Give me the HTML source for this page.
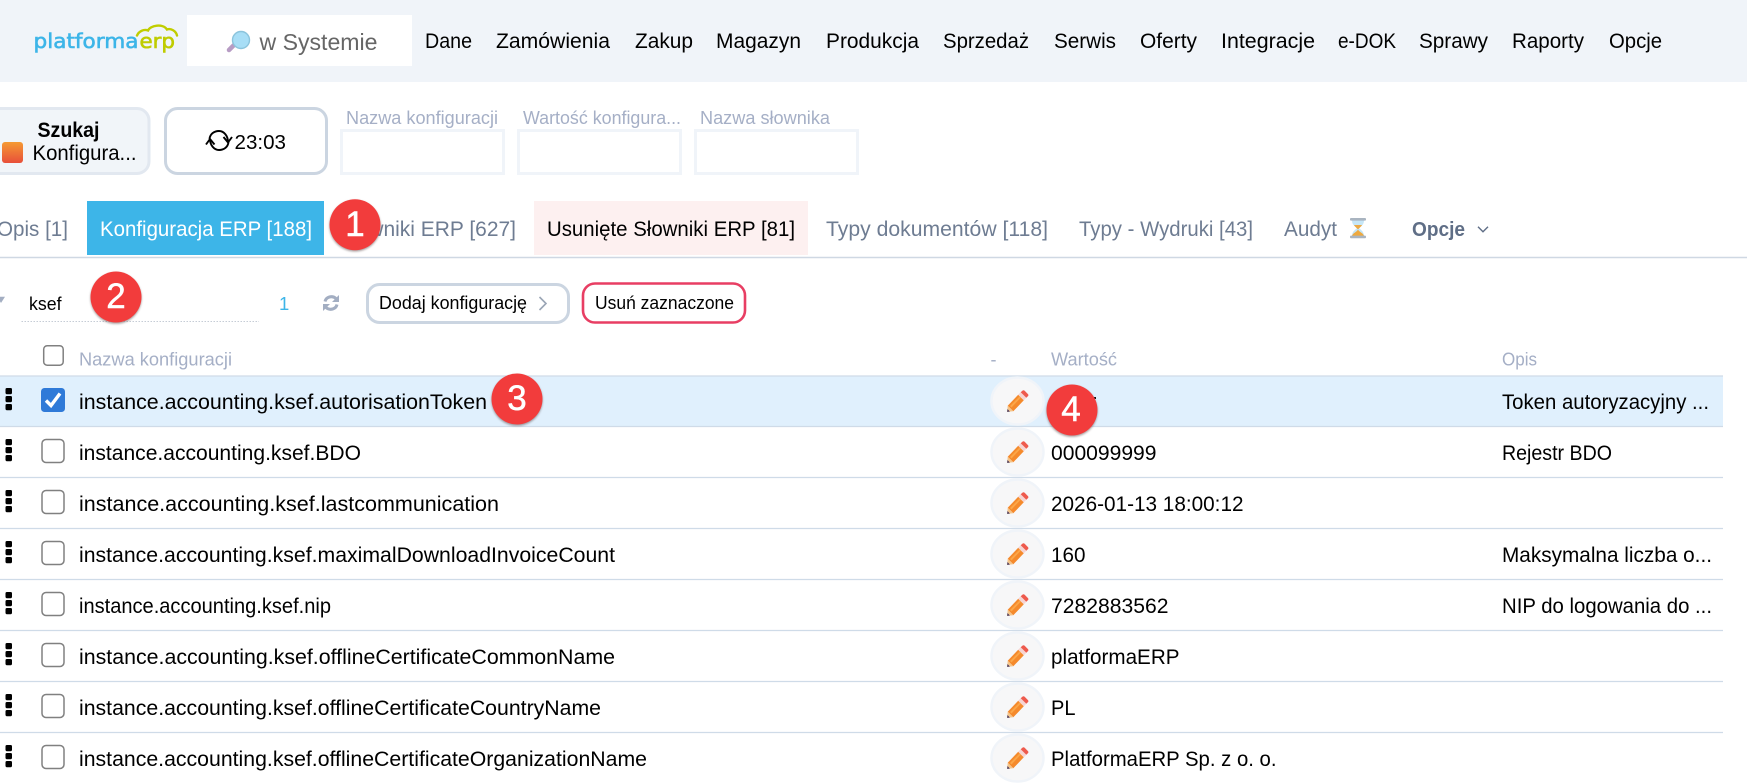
<!DOCTYPE html>
<html lang="pl"><head><meta charset="utf-8"><title>platformaERP</title>
<style>
html,body{margin:0;padding:0;background:#fff;width:1747px;height:783px;overflow:hidden}
svg{display:block;position:absolute;left:0;top:0}
text{font-family:"Liberation Sans",Arial,sans-serif}
.m{font-size:21px;fill:#000}
.t{font-size:21px;fill:#6e7c92}
.r{font-size:21px;fill:#000}
.h{font-size:18px;fill:#a5afc6}
.n{font-size:35px;fill:#fff;text-anchor:middle;stroke:#fff;stroke-width:.5}
.b{fill:#f23c3c}
.bs{fill:#6a5a5a;opacity:.6;filter:blur(1px)}
.cb{fill:#fff;stroke:#808080;stroke-width:1.5}
.d{fill:#000}
.pc{fill:#f7f7f8;stroke:#f0f4f9;stroke-width:2.5}
.ln{stroke:#cfdbe8;stroke-width:1.3}
</style></head><body>
<svg width="1747" height="783" viewBox="0 0 1747 783" xmlns="http://www.w3.org/2000/svg">
<defs>
<g id="pen">
<polygon points="-9.8,4.7 0.7,-6.3 6.3,-0.7 -4.2,10.3" fill="#f58a2c"/>
<polygon points="-7.5,5 3,-5.5 4.2,-4.3 -6,6.5" fill="#fba648"/>
<polygon points="0.7,-6.3 3.2,-8.8 8.8,-3.2 6.3,-0.7" fill="#f6d4d2"/>
<path d="M3.2,-8.8 L5,-10.4 Q6,-11 7,-10.4 L10.6,-6.8 Q11.3,-5.8 10.6,-5 L8.8,-3.2 Z" fill="#ee5a4d"/>
<polygon points="-9.8,4.7 -4.2,10.3 -10.4,10.9" fill="#f4c48a"/>
<polygon points="-10.4,10.9 -10,8 -7.6,10.6" fill="#4a3a5c"/>
</g>
<g id="keb"><rect x="5.5" y="0" width="6.5" height="6.2" rx="1.4"/><rect x="5.5" y="8" width="6.5" height="6.2" rx="1.4"/><rect x="5.5" y="16" width="6.5" height="6.2" rx="1.4"/></g>
<linearGradient id="og" x1="0" y1="0" x2="0" y2="1"><stop offset="0" stop-color="#f59a33"/><stop offset="1" stop-color="#e84f3a"/></linearGradient>
</defs>

<!-- header -->
<rect x="0" y="0" width="1747" height="82" fill="#f0f4f9"/>
<text x="33.5" y="48" font-size="20" style="font-family:'DejaVu Sans',sans-serif" fill="#3db5e8" stroke="#3db5e8" stroke-width=".6" textLength="105" lengthAdjust="spacingAndGlyphs">platforma</text>
<text x="139.5" y="48" font-size="20" style="font-family:'DejaVu Sans',sans-serif" fill="#bfcc00" stroke="#bfcc00" stroke-width=".6" textLength="35.5" lengthAdjust="spacingAndGlyphs">erp</text>
<path d="M137 35.5 C139 31 144 29 148 30.5 C150 25.5 163 23 167 29.5 C171 28 176 31 177 35.5" fill="none" stroke="#c0cd00" stroke-width="2.4" stroke-linecap="round"/>
<rect x="187" y="15" width="225" height="51" fill="#fff"/>
<line x1="229" y1="50" x2="234" y2="45" stroke="#b79cc4" stroke-width="4.5" stroke-linecap="round"/>
<circle cx="241" cy="40" r="8.5" fill="#a8def6" stroke="#8cc4dc" stroke-width="1.4"/>
<text x="259.5" y="50" font-size="23" fill="#666" textLength="118" lengthAdjust="spacingAndGlyphs">w Systemie</text>

<text class="m" x="425" y="48" textLength="47" lengthAdjust="spacingAndGlyphs">Dane</text>
<text class="m" x="496" y="48" textLength="114" lengthAdjust="spacingAndGlyphs">Zamówienia</text>
<text class="m" x="635" y="48" textLength="58" lengthAdjust="spacingAndGlyphs">Zakup</text>
<text class="m" x="716" y="48" textLength="85" lengthAdjust="spacingAndGlyphs">Magazyn</text>
<text class="m" x="826" y="48" textLength="93" lengthAdjust="spacingAndGlyphs">Produkcja</text>
<text class="m" x="943" y="48" textLength="86" lengthAdjust="spacingAndGlyphs">Sprzedaż</text>
<text class="m" x="1054" y="48" textLength="62" lengthAdjust="spacingAndGlyphs">Serwis</text>
<text class="m" x="1140" y="48" textLength="57" lengthAdjust="spacingAndGlyphs">Oferty</text>
<text class="m" x="1221" y="48" textLength="94" lengthAdjust="spacingAndGlyphs">Integracje</text>
<text class="m" x="1338" y="48" textLength="58" lengthAdjust="spacingAndGlyphs">e-DOK</text>
<text class="m" x="1419" y="48" textLength="69" lengthAdjust="spacingAndGlyphs">Sprawy</text>
<text class="m" x="1512" y="48" textLength="72" lengthAdjust="spacingAndGlyphs">Raporty</text>
<text class="m" x="1609" y="48" textLength="53" lengthAdjust="spacingAndGlyphs">Opcje</text>

<!-- toolbar -->
<rect x="-12" y="108.5" width="161" height="65" rx="12" fill="#f1f5f9" stroke="#e2e8f0" stroke-width="3"/>
<text x="37.5" y="137" font-size="21" font-weight="700" fill="#000" textLength="62" lengthAdjust="spacingAndGlyphs">Szukaj</text>
<rect x="2" y="142" width="21" height="21" rx="3" fill="url(#og)"/>
<text x="32.5" y="160" font-size="21" fill="#000" textLength="104" lengthAdjust="spacingAndGlyphs">Konfigura...</text>

<rect x="165.5" y="108.5" width="161" height="65" rx="12" fill="#fff" stroke="#cbd5e1" stroke-width="3"/>
<g fill="none" stroke="#000" stroke-width="1.9">
<path d="M209.5 139 C210 134 214 131 219 131 C224 131 228 136 228 142"/>
<path d="M223.5 137 L228 142.5 L232 137"/>
<path d="M228.5 142 C228 147 224 150 219 150 C214 150 210 145 210 139"/>
<path d="M206 144.5 L210 139 L214.5 144.5"/>
</g>
<text x="234.5" y="149" font-size="20.5" fill="#000" textLength="51.5" lengthAdjust="spacingAndGlyphs">23:03</text>

<text class="h" x="346" y="124" textLength="152" lengthAdjust="spacingAndGlyphs">Nazwa konfiguracji</text>
<text class="h" x="523" y="124" textLength="158" lengthAdjust="spacingAndGlyphs">Wartość konfigura...</text>
<text class="h" x="700" y="124" textLength="130" lengthAdjust="spacingAndGlyphs">Nazwa słownika</text>
<rect x="341.5" y="130.5" width="162" height="43" fill="#fff" stroke="#f0f4f9" stroke-width="3"/>
<rect x="518.5" y="130.5" width="162" height="43" fill="#fff" stroke="#f0f4f9" stroke-width="3"/>
<rect x="695.5" y="130.5" width="162" height="43" fill="#fff" stroke="#f0f4f9" stroke-width="3"/>

<!-- tabs -->
<rect x="87" y="201" width="237" height="54" fill="#3db5e8"/>
<rect x="534" y="201" width="274" height="54" fill="#fdf0f0"/>
<line x1="0" y1="257.5" x2="1747" y2="257.5" stroke="#cfd8e3" stroke-width="1.5"/>
<text class="t" x="-3" y="236" textLength="71" lengthAdjust="spacingAndGlyphs">Opis [1]</text>
<text class="t" x="100" y="236" style="fill:#fff" textLength="212" lengthAdjust="spacingAndGlyphs">Konfiguracja ERP [188]</text>
<text class="t" x="338" y="236" textLength="178" lengthAdjust="spacingAndGlyphs">Słowniki ERP [627]</text>
<text class="t" x="547" y="236" style="fill:#000" textLength="248" lengthAdjust="spacingAndGlyphs">Usunięte Słowniki ERP [81]</text>
<text class="t" x="826" y="236" textLength="222" lengthAdjust="spacingAndGlyphs">Typy dokumentów [118]</text>
<text class="t" x="1079" y="236" textLength="174" lengthAdjust="spacingAndGlyphs">Typy - Wydruki [43]</text>
<text class="t" x="1284" y="236" textLength="53" lengthAdjust="spacingAndGlyphs">Audyt</text>
<path d="M1352 220.5 H1364 C1364 225.5 1360 226.5 1359 228 C1360 229.5 1364 231 1364 236 H1352 C1352 231 1356 229.5 1357 228 C1356 226.5 1352 225.5 1352 220.5 Z" fill="#c6e6f6"/>
<path d="M1354 225 H1362 C1361 227 1359 228 1358.5 229 H1357.5 C1357 228 1355 227 1354 225 Z" fill="#eba945"/>
<path d="M1358 229.5 C1359 232 1363.5 233 1364 236 H1352 C1352.5 233 1357 232 1358 229.5 Z" fill="#eea93f"/>
<rect x="1350" y="218" width="16" height="2.6" rx="1" fill="#a9b4c0"/>
<rect x="1350" y="235.6" width="16" height="2.6" rx="1" fill="#a9b4c0"/>
<text x="1412" y="236" font-size="20.5" font-weight="700" fill="#5f6e86" textLength="53" lengthAdjust="spacingAndGlyphs">Opcje</text>
<path d="M1478 226.7 L1483 231.7 L1488 226.7" fill="none" stroke="#5f6e86" stroke-width="1.4"/>

<!-- filter row -->
<path d="M-3 296.7 H5 L1 303 Z" fill="#a3aec2"/>
<line x1="21.5" y1="321.5" x2="259" y2="321.5" stroke="#c6ccd6" stroke-width="1" stroke-dasharray="1.5 1.5"/>
<text x="29" y="310" font-size="18.5" fill="#000" textLength="32.5" lengthAdjust="spacingAndGlyphs">ksef</text>
<text x="279" y="310" font-size="18.5" fill="#3db5e8">1</text>
<path d="M325 301.5 C326 297 332 295 336 298.5" fill="none" stroke="#a3aec2" stroke-width="3"/>
<path d="M339 295 V302 H332 Z" fill="#a3aec2"/>
<path d="M337 304.5 C336 309 330 311 326 307.5" fill="none" stroke="#a3aec2" stroke-width="3"/>
<path d="M323 311 V304 H330 Z" fill="#a3aec2"/>
<rect x="367.5" y="284.5" width="201" height="38" rx="12" fill="#fff" stroke="#cbd5e1" stroke-width="3"/>
<text x="379" y="309" font-size="18.5" fill="#000" textLength="148" lengthAdjust="spacingAndGlyphs">Dodaj konfigurację</text>
<path d="M539.5 297 L546 303.5 L539.5 310" fill="none" stroke="#9aa5b5" stroke-width="1.6"/>
<rect x="583" y="283.5" width="162" height="39" rx="12" fill="#fff" stroke="#e83e63" stroke-width="2.6"/>
<text x="595" y="309" font-size="18" fill="#000" textLength="139" lengthAdjust="spacingAndGlyphs">Usuń zaznaczone</text>

<!-- table header -->
<rect x="43.7" y="345.7" width="19.5" height="19.5" rx="3.5" class="cb"/>
<text class="h" x="79" y="365.5" textLength="153" lengthAdjust="spacingAndGlyphs">Nazwa konfiguracji</text>
<text class="h" x="990.5" y="365.5">-</text>
<text class="h" x="1051" y="365.5" textLength="66" lengthAdjust="spacingAndGlyphs">Wartość</text>
<text class="h" x="1502" y="365.5" textLength="35" lengthAdjust="spacingAndGlyphs">Opis</text>

<!-- rows -->
<rect x="0" y="376" width="1723" height="50" fill="#e0f0fd"/>
<g class="ln">
<line x1="0" y1="376" x2="1723" y2="376"/><line x1="0" y1="426.5" x2="1723" y2="426.5"/>
<line x1="0" y1="477.5" x2="1723" y2="477.5"/><line x1="0" y1="528.5" x2="1723" y2="528.5"/>
<line x1="0" y1="579.5" x2="1723" y2="579.5"/><line x1="0" y1="630.5" x2="1723" y2="630.5"/>
<line x1="0" y1="681.5" x2="1723" y2="681.5"/><line x1="0" y1="732.5" x2="1723" y2="732.5"/>
</g>

<use href="#keb" class="d" y="388"/><use href="#keb" class="d" y="439"/><use href="#keb" class="d" y="490"/><use href="#keb" class="d" y="541"/>
<use href="#keb" class="d" y="592"/><use href="#keb" class="d" y="643"/><use href="#keb" class="d" y="694"/><use href="#keb" class="d" y="745"/>

<rect x="41" y="388" width="24" height="24" rx="3.5" fill="#2f7ad8"/>
<path d="M46 400.5 L51 405.5 L60 393.5" fill="none" stroke="#fff" stroke-width="3.4"/>
<rect x="42" y="439.5" width="22" height="23" rx="4" class="cb"/>
<rect x="42" y="490.5" width="22" height="23" rx="4" class="cb"/>
<rect x="42" y="541.5" width="22" height="23" rx="4" class="cb"/>
<rect x="42" y="592.5" width="22" height="23" rx="4" class="cb"/>
<rect x="42" y="643.5" width="22" height="23" rx="4" class="cb"/>
<rect x="42" y="694.5" width="22" height="23" rx="4" class="cb"/>
<rect x="42" y="745.5" width="22" height="23" rx="4" class="cb"/>

<text class="r" x="79" y="409" textLength="408" lengthAdjust="spacingAndGlyphs">instance.accounting.ksef.autorisationToken</text>
<text class="r" x="79" y="460" textLength="282" lengthAdjust="spacingAndGlyphs">instance.accounting.ksef.BDO</text>
<text class="r" x="79" y="511" textLength="420" lengthAdjust="spacingAndGlyphs">instance.accounting.ksef.lastcommunication</text>
<text class="r" x="79" y="562" textLength="536" lengthAdjust="spacingAndGlyphs">instance.accounting.ksef.maximalDownloadInvoiceCount</text>
<text class="r" x="79" y="613" textLength="252" lengthAdjust="spacingAndGlyphs">instance.accounting.ksef.nip</text>
<text class="r" x="79" y="664" textLength="536" lengthAdjust="spacingAndGlyphs">instance.accounting.ksef.offlineCertificateCommonName</text>
<text class="r" x="79" y="715" textLength="522" lengthAdjust="spacingAndGlyphs">instance.accounting.ksef.offlineCertificateCountryName</text>
<text class="r" x="79" y="766" textLength="568" lengthAdjust="spacingAndGlyphs">instance.accounting.ksef.offlineCertificateOrganizationName</text>

<g>
<ellipse class="pc" cx="1017.5" cy="401" rx="26" ry="23.5"/><use href="#pen" x="1017.5" y="401"/>
<ellipse class="pc" cx="1017.5" cy="452" rx="26" ry="23.5"/><use href="#pen" x="1017.5" y="452"/>
<ellipse class="pc" cx="1017.5" cy="503" rx="26" ry="23.5"/><use href="#pen" x="1017.5" y="503"/>
<ellipse class="pc" cx="1017.5" cy="554" rx="26" ry="23.5"/><use href="#pen" x="1017.5" y="554"/>
<ellipse class="pc" cx="1017.5" cy="605" rx="26" ry="23.5"/><use href="#pen" x="1017.5" y="605"/>
<ellipse class="pc" cx="1017.5" cy="656" rx="26" ry="23.5"/><use href="#pen" x="1017.5" y="656"/>
<ellipse class="pc" cx="1017.5" cy="707" rx="26" ry="23.5"/><use href="#pen" x="1017.5" y="707"/>
<ellipse class="pc" cx="1017.5" cy="758" rx="26" ry="23.5"/><use href="#pen" x="1017.5" y="758"/>
</g>

<rect x="1092" y="397" width="4" height="2" fill="#111"/>
<text class="r" x="1051" y="460" textLength="105.5" lengthAdjust="spacingAndGlyphs">000099999</text>
<text class="r" x="1051" y="511" textLength="192.5" lengthAdjust="spacingAndGlyphs">2026-01-13 18:00:12</text>
<text class="r" x="1051" y="562" textLength="34.5" lengthAdjust="spacingAndGlyphs">160</text>
<text class="r" x="1051" y="613" textLength="117.5" lengthAdjust="spacingAndGlyphs">7282883562</text>
<text class="r" x="1051" y="664" textLength="128.5" lengthAdjust="spacingAndGlyphs">platformaERP</text>
<text class="r" x="1051" y="715" textLength="24.5" lengthAdjust="spacingAndGlyphs">PL</text>
<text class="r" x="1051" y="766" textLength="225.5" lengthAdjust="spacingAndGlyphs">PlatformaERP Sp. z o. o.</text>

<text class="r" x="1502" y="409" textLength="207" lengthAdjust="spacingAndGlyphs">Token autoryzacyjny ...</text>
<text class="r" x="1502" y="460" textLength="110" lengthAdjust="spacingAndGlyphs">Rejestr BDO</text>
<text class="r" x="1502" y="562" textLength="210" lengthAdjust="spacingAndGlyphs">Maksymalna liczba o...</text>
<text class="r" x="1502" y="613" textLength="210" lengthAdjust="spacingAndGlyphs">NIP do logowania do ...</text>

<!-- callouts -->
<circle class="bs" cx="355" cy="226" r="25.5"/><circle class="b" cx="355" cy="224.7" r="25.5"/><text class="n" x="355" y="236">1</text>
<circle class="bs" cx="116" cy="298.3" r="25.5"/><circle class="b" cx="116" cy="297" r="25.5"/><text class="n" x="116" y="308">2</text>
<circle class="bs" cx="517" cy="400.3" r="25.5"/><circle class="b" cx="517" cy="399" r="25.5"/><text class="n" x="517" y="410">3</text>
<circle class="bs" cx="1072" cy="411.3" r="25.5"/><circle class="b" cx="1072" cy="410" r="25.5"/><text class="n" x="1071" y="421">4</text>
</svg>
</body></html>
